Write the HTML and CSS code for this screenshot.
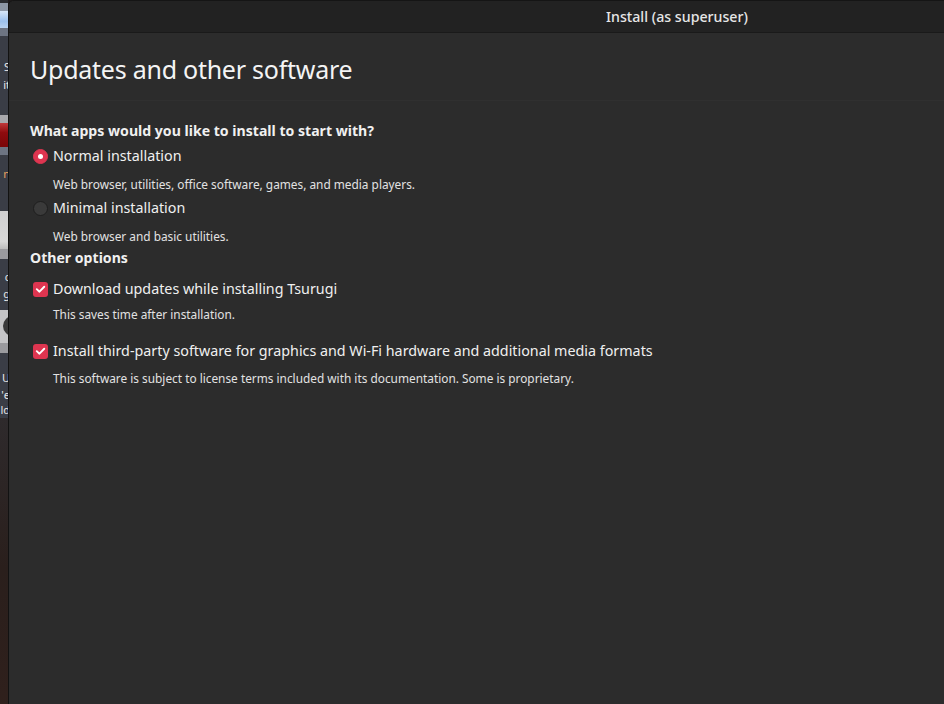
FILE: index.html
```html
<!DOCTYPE html>
<html>
<head>
<meta charset="utf-8">
<link rel="stylesheet" href="styles.css">
</head>
<body>
<div class="desktop">
  <div class="d-top"></div>
  <div class="d-grey"></div>
  <div class="d-blue"></div>
  <div class="d-grey2"></div>
  <div class="d-dark d-h22"></div>
  <div class="d-txt t18">S</div>
  <div class="d-txt t18">it</div>
  <div class="d-dark d-h21"></div>
  <div class="d-line"></div>
  <div class="d-red"></div>
  <div class="d-grey2"></div>
  <div class="d-dark d-h10"></div>
  <div class="d-txt t18 d-orange">n</div>
  <div class="d-dark d-h28"></div>
  <div class="d-panel"></div>
  <div class="d-grey3"></div>
  <div class="d-dark d-h10"></div>
  <div class="d-txt t16">c</div>
  <div class="d-txt t20">g</div>
  <div class="d-dark d-h5"></div>
  <div class="d-panel2"><span class="d-disc"></span></div>
  <div class="d-grey3 d-h14"></div>
  <div class="d-dark d-h16"></div>
  <div class="d-txt t18">U</div>
  <div class="d-txt t15">e'</div>
  <div class="d-txt t16">ld</div>
  <div class="d-bg"></div>
</div>
<div class="window">
  <div class="titlebar"><span class="title">Install (as superuser)</span></div>
  <div class="header"><h1 class="heading">Updates and other software</h1></div>
  <div class="content">
    <div class="section-title q">What apps would you like to install to start with?</div>
    <div class="option o-normal">
      <span class="radio checked"></span><span class="label">Normal installation</span>
    </div>
    <div class="desc d1">Web browser, utilities, office software, games, and media players.</div>
    <div class="option o-minimal">
      <span class="radio"></span><span class="label">Minimal installation</span>
    </div>
    <div class="desc d1">Web browser and basic utilities.</div>
    <div class="section-title other">Other options</div>
    <div class="option o-dl">
      <span class="check"><svg viewBox="0 0 16 16" width="16" height="16"><path d="M4 8.2 L6.9 10.9 L12 5.6" fill="none" stroke="#fff" stroke-width="2" stroke-linecap="round" stroke-linejoin="round"/></svg></span><span class="label">Download updates while installing Tsurugi</span>
    </div>
    <div class="desc d2">This saves time after installation.</div>
    <div class="option o-tp">
      <span class="check"><svg viewBox="0 0 16 16" width="16" height="16"><path d="M4 8.2 L6.9 10.9 L12 5.6" fill="none" stroke="#fff" stroke-width="2" stroke-linecap="round" stroke-linejoin="round"/></svg></span><span class="label">Install third-party software for graphics and Wi-Fi hardware and additional media formats</span>
    </div>
    <div class="desc d3">This software is subject to license terms included with its documentation. Some is proprietary.</div>
  </div>
</div>
</body>
</html>
```

FILE: styles.css
```css
html, body {
  margin: 0;
  padding: 0;
  height: 704px;
  overflow: hidden;
  background: #1e1a1a;
}
body {
  display: flex;
  font-family: "Noto Sans", "DejaVu Sans", sans-serif;
}
.desktop {
  width: 8px;
  flex: none;
  display: flex;
  flex-direction: column;
  overflow: hidden;
  background: #2f3139;
}
.desktop > div { flex: none; }
.d-top { height: 3px; background: #2a2c30; }
.d-grey { height: 8px; background: #8d97a6; }
.d-blue { height: 17px; background: linear-gradient(#d8e6f6, #9cc0ec 60%, #b9d2f0); }
.d-grey2 { height: 8px; background: #6d7482; }
.d-dark { background: #3a3d46; }
.d-h22 { height: 22px; }
.d-h21 { height: 21px; }
.d-h10 { height: 10px; }
.d-h28 { height: 28px; }
.d-h5 { height: 5px; }
.d-h14 { height: 14px; }
.d-h16 { height: 16px; }
.d-txt {
  font-size: 11px;
  color: #e8e8e8;
  text-align: right;
  white-space: nowrap;
  direction: rtl;
  margin-right: -2px;
  background: #3a3d46;
  overflow: hidden;
}
.t15 { height: 15px; line-height: 15px; }
.t16 { height: 16px; line-height: 16px; }
.t18 { height: 18px; line-height: 18px; }
.t20 { height: 20px; line-height: 18px; }
.d-orange { color: #e8a060; }
.d-line { height: 8px; background: #a8a8ac; }
.d-red { height: 24px; background: linear-gradient(#c0383a, #8e0b0e 40%, #7a0608); }
.d-panel { height: 38px; background: linear-gradient(#cfcfd0, #d8d8d8 80%, #bdbdbd); }
.d-grey3 { height: 10px; background: #9a9a9e; }
.d-panel2 { height: 33px; background: #c4c4c6; position: relative; overflow: hidden; }
.d-disc { position: absolute; left: 3px; top: 6px; width: 20px; height: 20px; border-radius: 50%; background: #3a3a3a; }
.d-bg { height: 300px; background: linear-gradient(#2e2a2c, #2a1f1c 50%, #30201c); }

.window {
  flex: 1;
  background: #2c2c2c;
  border-left: 1px solid #121212;
  border-top: 1px solid #151515;
  border-top-left-radius: 6px;
  color: #f2f2f2;
  overflow: hidden;
}
.titlebar {
  height: 32px;
  background: #222222;
  border-bottom: 1px solid #1a1a1a;
  display: flex;
  align-items: center;
  padding-left: 597px;
  box-sizing: border-box;
}
.title {
  font-size: 14.2px;
  font-weight: 500;
  color: #e6e6e6;
  white-space: nowrap;
}
.header {
  height: 68px;
  box-sizing: border-box;
  border-bottom: 1px solid #303030;
  padding: 22px 0 0 21px;
}
.heading {
  margin: 0;
  font-size: 25px;
  font-weight: 400;
  line-height: 28px;
  color: #f4f4f4;
  letter-spacing: -0.25px;
  white-space: nowrap;
}
.content {
  padding-left: 21px;
}
.section-title {
  font-size: 14.1px;
  font-weight: 700;
  line-height: 20px;
  color: #f0f0f0;
  white-space: nowrap;
}
.q { margin-top: 20px; }
.other { margin-top: 4px; }
.option {
  display: flex;
  align-items: center;
  height: 24px;
  gap: 5px;
  padding-left: 3px;
}
.o-normal { margin-top: 3px; }
.o-minimal { margin-top: 4px; }
.o-dl { margin-top: 9px; }
.o-tp { margin-top: 17px; }
.label {
  font-size: 14.3px;
  line-height: 20px;
  color: #f0f0f0;
  white-space: nowrap;
}
.desc {
  font-size: 11.85px;
  line-height: 16px;
  color: #e2e2e2;
  padding-left: 23px;
  white-space: nowrap;
}
.d1 { margin-top: 8px; }
.d2 { margin-top: 5px; }
.d3 { margin-top: 7px; }
.radio {
  width: 15px;
  height: 15px;
  border-radius: 50%;
  box-sizing: border-box;
  background: #3a3a3a;
  border: 1px solid #1e1e1e;
  flex: none;
  display: flex;
  align-items: center;
  justify-content: center;
}
.radio.checked {
  background: #de3550;
  border-color: #de3550;
}
.radio.checked::after {
  content: "";
  width: 5px;
  height: 5px;
  border-radius: 50%;
  background: #fff;
}
.check {
  width: 15px;
  height: 15px;
  border-radius: 3px;
  background: #de3550;
  flex: none;
  display: flex;
  align-items: center;
  justify-content: center;
}
.check svg { display: block; }
```
